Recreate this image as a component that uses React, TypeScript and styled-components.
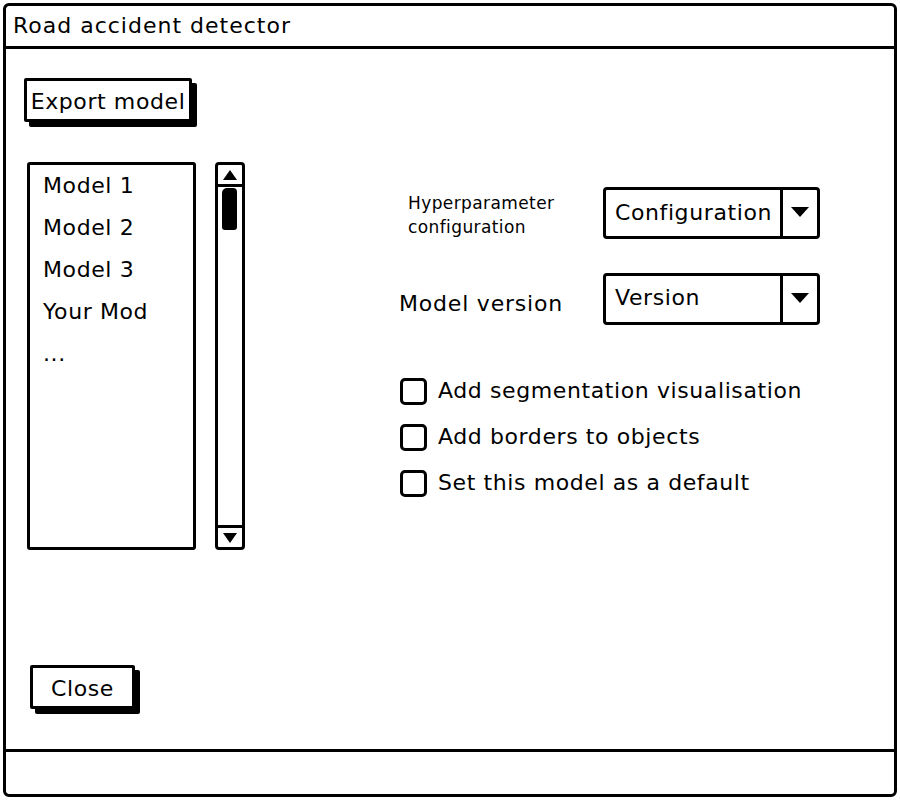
import React from 'react';
import styled, { createGlobalStyle } from 'styled-components';

const ink = '#000';
const font = '"DejaVu Sans", "Noto Sans", sans-serif';

const GlobalStyle = createGlobalStyle`
  html, body {
    margin: 0;
    padding: 0;
    background: #fff;
  }
  body {
    font-family: ${font};
    color: ${ink};
    letter-spacing: 0.6px;
  }
`;

const Window = styled.div`
  box-sizing: border-box;
  width: 894px;
  height: 794px;
  margin: 3px 0 0 3px;
  border: 3px solid ${ink};
  border-radius: 6px;
  display: flex;
  flex-direction: column;
  background: #fff;
`;

const TitleBar = styled.div`
  box-sizing: border-box;
  height: 43px;
  border-bottom: 3px solid ${ink};
  display: flex;
  align-items: center;
  padding: 0 0 2px 7px;
  font-size: 22px;
  letter-spacing: 1px;
`;

const Body = styled.div`
  flex: 1;
  display: flex;
  flex-direction: column;
  padding: 29px 0 0 18px;
`;

const StatusBar = styled.div`
  height: 42px;
  border-top: 3px solid ${ink};
`;

const SketchButton = styled.button<{ $width: number }>`
  box-sizing: border-box;
  width: ${(p) => p.$width}px;
  height: 44px;
  border: 3px solid ${ink};
  border-radius: 2px;
  box-shadow: 5px 5px 0 ${ink};
  background: #fff;
  font-family: ${font};
  font-size: 22px;
  letter-spacing: 0.6px;
  color: ${ink};
  padding: 2px 0 0;
  display: flex;
  align-items: center;
  justify-content: center;
`;

const MainRow = styled.div`
  display: flex;
  margin: 40px 0 0 3px;
`;

const ListBox = styled.div`
  box-sizing: border-box;
  width: 169px;
  height: 388px;
  border: 3px solid ${ink};
  border-radius: 3px;
  padding: 4px 0 0 13px;
  display: flex;
  flex-direction: column;
`;

const ListItem = styled.div`
  height: 42px;
  line-height: 34px;
  font-size: 22px;
`;

const Scrollbar = styled.div`
  box-sizing: border-box;
  width: 30px;
  height: 388px;
  margin-left: 19px;
  border: 3px solid ${ink};
  border-radius: 4px;
  display: flex;
  flex-direction: column;
`;

const ScrollArrow = styled.div<{ $top?: boolean }>`
  height: 19px;
  display: flex;
  align-items: center;
  justify-content: center;
  ${(p) => (p.$top ? `border-bottom: 3px solid ${ink};` : `border-top: 3px solid ${ink};`)}
`;

const ScrollTrack = styled.div`
  flex: 1;
  padding: 1px 0 0 4px;
`;

const Thumb = styled.div`
  width: 15px;
  height: 42px;
  background: ${ink};
  border-radius: 5px 4px 3px 3px;
`;

const Settings = styled.div`
  display: flex;
  flex-direction: column;
  margin: 25px 0 0 154px;
`;

const FormRow = styled.div`
  display: flex;
  align-items: center;
  margin-bottom: 34px;
`;

const FieldLabel = styled.div<{ $small?: boolean }>`
  width: ${(p) => (p.$small ? 195 : 204)}px;
  padding-left: ${(p) => (p.$small ? 9 : 0)}px;
  font-size: ${(p) => (p.$small ? 17 : 22)}px;
  letter-spacing: ${(p) => (p.$small ? 0.4 : 0.8)}px;
  line-height: ${(p) => (p.$small ? '24px' : '30px')};
  margin-top: ${(p) => (p.$small ? 3 : 10)}px;
  white-space: nowrap;
`;

const Select = styled.div`
  box-sizing: border-box;
  width: 217px;
  height: 52px;
  border: 3px solid ${ink};
  border-radius: 4px;
  display: flex;
`;

const SelectValue = styled.div<{ $raise?: boolean }>`
  flex: 1;
  padding-left: 9px;
  font-size: 22px;
  display: flex;
  align-items: center;
  padding-bottom: ${(p) => (p.$raise ? 4 : 2)}px;
`;

const SelectArrow = styled.div`
  width: 34px;
  border-left: 3px solid ${ink};
  display: flex;
  align-items: center;
  justify-content: center;
  padding-bottom: 2px;
`;

const CheckList = styled.div`
  display: flex;
  flex-direction: column;
  margin-top: 19px;
  gap: 20px;
`;

const CheckRow = styled.label`
  display: flex;
  align-items: center;
  gap: 11px;
  font-size: 22px;
  height: 26px;
  margin-left: 1px;
  white-space: nowrap;
`;

const CheckText = styled.span`
  margin-top: -1px;
`;

const CheckBox = styled.span`
  box-sizing: border-box;
  width: 27px;
  height: 27px;
  border: 3px solid ${ink};
  border-radius: 5px;
`;

const Footer = styled.div`
  margin-top: auto;
  padding: 0 0 40px 6px;
`;

const Triangle = ({ up }: { up?: boolean }) => (
  <svg width="14" height="10" viewBox="0 0 14 10">
    <polygon points={up ? '7,0 14,10 0,10' : '0,0 14,0 7,10'} fill={ink} />
  </svg>
);

const DropTriangle = () => (
  <svg width="18" height="10" viewBox="0 0 18 10">
    <polygon points="0,0 18,0 9,10" fill={ink} />
  </svg>
);

const models = ['Model 1', 'Model 2', 'Model 3', 'Your Mod', '...'];

const options = [
  'Add segmentation visualisation',
  'Add borders to objects',
  'Set this model as a default',
];

export default function App() {
  return (
    <>
      <GlobalStyle />
      <Window>
        <TitleBar>Road accident detector</TitleBar>
        <Body>
          <SketchButton $width={168}>Export model</SketchButton>
          <MainRow>
            <ListBox>
              {models.map((m) => (
                <ListItem key={m}>{m}</ListItem>
              ))}
            </ListBox>
            <Scrollbar>
              <ScrollArrow $top>
                <Triangle up />
              </ScrollArrow>
              <ScrollTrack>
                <Thumb />
              </ScrollTrack>
              <ScrollArrow>
                <Triangle />
              </ScrollArrow>
            </Scrollbar>
            <Settings>
              <FormRow>
                <FieldLabel $small>
                  Hyperparameter
                  <br />
                  configuration
                </FieldLabel>
                <Select>
                  <SelectValue>Configuration</SelectValue>
                  <SelectArrow>
                    <DropTriangle />
                  </SelectArrow>
                </Select>
              </FormRow>
              <FormRow>
                <FieldLabel>Model version</FieldLabel>
                <Select>
                  <SelectValue $raise>Version</SelectValue>
                  <SelectArrow>
                    <DropTriangle />
                  </SelectArrow>
                </Select>
              </FormRow>
              <CheckList>
                {options.map((o) => (
                  <CheckRow key={o}>
                    <CheckBox />
                    <CheckText>{o}</CheckText>
                  </CheckRow>
                ))}
              </CheckList>
            </Settings>
          </MainRow>
          <Footer>
            <SketchButton $width={105}>Close</SketchButton>
          </Footer>
        </Body>
        <StatusBar />
      </Window>
    </>
  );
}
